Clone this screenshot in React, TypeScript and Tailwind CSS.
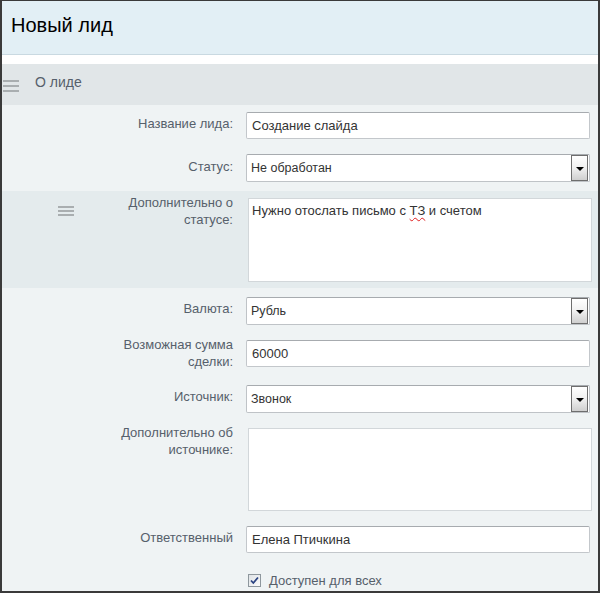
import React from "react";

const FONT = "font-['Liberation_Sans',Arial,sans-serif]";

function Hamburger({ gap }: { gap: "sm" | "lg" }) {
  return (
    <div className={gap === "lg" ? "flex w-[16px] flex-col gap-[3px]" : "flex w-[16px] flex-col gap-[2px]"}>
      <div className="h-[2px] w-full bg-[#a9aeb0]" />
      <div className="h-[2px] w-full bg-[#a9aeb0]" />
      <div className="h-[2px] w-full bg-[#a9aeb0]" />
    </div>
  );
}

function Label({ children, className = "" }: { children: React.ReactNode; className?: string }) {
  return (
    <div className={`w-[232px] shrink-0 pr-[1px] text-right text-[13px] leading-[17px] text-[#56606b] ${className}`}>
      {children}
    </div>
  );
}

function TextInput({ value }: { value: string }) {
  return (
    <div className="ml-[12px] flex h-[27px] w-[344px] shrink-0 items-center rounded-[2px] border border-[#c3c7cb] border-t-[#a7abaf] bg-white pl-[5px] text-[13px] text-[#333]">
      {value}
    </div>
  );
}

function Select({ value }: { value: string }) {
  return (
    <div className="ml-[12px] flex h-[28px] w-[344px] shrink-0 items-stretch rounded-[2px] border border-[#bfc3c7] border-t-[#a7abaf] bg-white">
      <div className="flex flex-1 items-center pl-[4px] text-[12.5px] text-[#333]">{value}</div>
      <div className="mr-[1px] flex w-[17px] items-center justify-center border border-[#6e6e6e] bg-gradient-to-b from-[#ffffff] via-[#f0f0f0] to-[#cfcfcf] pt-[2px]">
        <div className="h-0 w-0 border-x-[4px] border-t-[4px] border-x-transparent border-t-black" />
      </div>
    </div>
  );
}

function TextArea({ children, h }: { children?: React.ReactNode; h: "a" | "b" }) {
  return (
    <div
      className={`ml-[14px] w-[344px] shrink-0 border border-[#d2d7da] bg-white pl-[3px] pt-[3px] text-[13px] leading-[17px] text-[#333] ${
        h === "a" ? "h-[84px]" : "h-[83px]"
      }`}
    >
      {children}
    </div>
  );
}

export default function App() {
  return (
    <div
      className={`${FONT} flex h-[593px] w-[600px] flex-col overflow-hidden border-b-2 border-l-2 border-r-2 border-t border-[#3a3a3a] bg-[#eff3f4]`}
    >
      {/* Header */}
      <div className="h-[54px] shrink-0 border-b border-[#c9d9e1] bg-[#e2eff5] pl-[9px] pt-[12px] text-[20px] leading-[24px] text-black">
        Новый лид
      </div>
      <div className="h-[9px] shrink-0 bg-white" />
      {/* Section header */}
      <div className="flex h-[41px] shrink-0 items-start bg-[#e1e6e8]">
        <div className="ml-[1px] mt-[16px]">
          <Hamburger gap="lg" />
        </div>
        <div className="ml-[16px] mt-[10px] text-[14px] leading-[17px] text-[#56606b]">О лиде</div>
      </div>

      {/* Body */}
      <div className="flex flex-col">
        <div className="mt-[7px] flex h-[27px] items-start">
          <Label className="mt-[3px]">Название лида:</Label>
          <TextInput value="Создание слайда" />
        </div>

        <div className="mt-[15px] flex h-[28px] items-start">
          <Label className="mt-[4px]">Статус:</Label>
          <Select value="Не обработан" />
        </div>

        <div className="mt-[9px] flex items-start bg-[#e4ebed] pb-[6px] pt-[7px]">
          <div className="-mt-[4px] flex w-[232px] shrink-0 items-start">
            <div className="ml-[56px] mt-[12px]">
              <Hamburger gap="sm" />
            </div>
            <div className="flex-1 pr-[1px] text-right text-[13px] leading-[17px] text-[#56606b]">
              Дополнительно о<br />
              статусе:
            </div>
          </div>
          <TextArea h="a">
            Нужно отослать письмо с{" "}
            <span className="underline decoration-[#e02020] decoration-wavy decoration-1 underline-offset-[2px]">ТЗ</span> и
            счетом
          </TextArea>
        </div>

        <div className="mt-[9px] flex h-[28px] items-start">
          <Label className="mt-[3px]">Валюта:</Label>
          <Select value="Рубль" />
        </div>

        <div className="mt-[15px] flex h-[27px] items-start">
          <Label className="-mt-[4px]">
            Возможная сумма
            <br />
            сделки:
          </Label>
          <TextInput value="60000" />
        </div>

        <div className="mt-[18px] flex h-[28px] items-start">
          <Label className="mt-[3px]">Источник:</Label>
          <Select value="Звонок" />
        </div>

        <div className="mt-[15px] flex h-[83px] items-start">
          <Label className="-mt-[4px]">
            Дополнительно об
            <br />
            источнике:
          </Label>
          <TextArea h="b" />
        </div>

        <div className="mt-[15px] flex h-[27px] items-start">
          <Label className="mt-[3px]">Ответственный</Label>
          <TextInput value="Елена Птичкина" />
        </div>

        <div className="mt-[21px] flex items-start pl-[246px]">
          <div className="flex h-[13px] w-[13px] items-center justify-center border border-[#8e979d] bg-gradient-to-br from-[#dfe3e6] to-[#fbfbfb]">
            <svg width="9" height="9" viewBox="0 0 9 9">
              <path d="M1 4.5 L3.3 7 L8 1.5" fill="none" stroke="#2b4482" strokeWidth="1.8" />
            </svg>
          </div>
          <div className="-mt-[2px] ml-[8px] text-[13px] leading-[17px] text-[#56606b]">Доступен для всех</div>
        </div>
      </div>
    </div>
  );
}
